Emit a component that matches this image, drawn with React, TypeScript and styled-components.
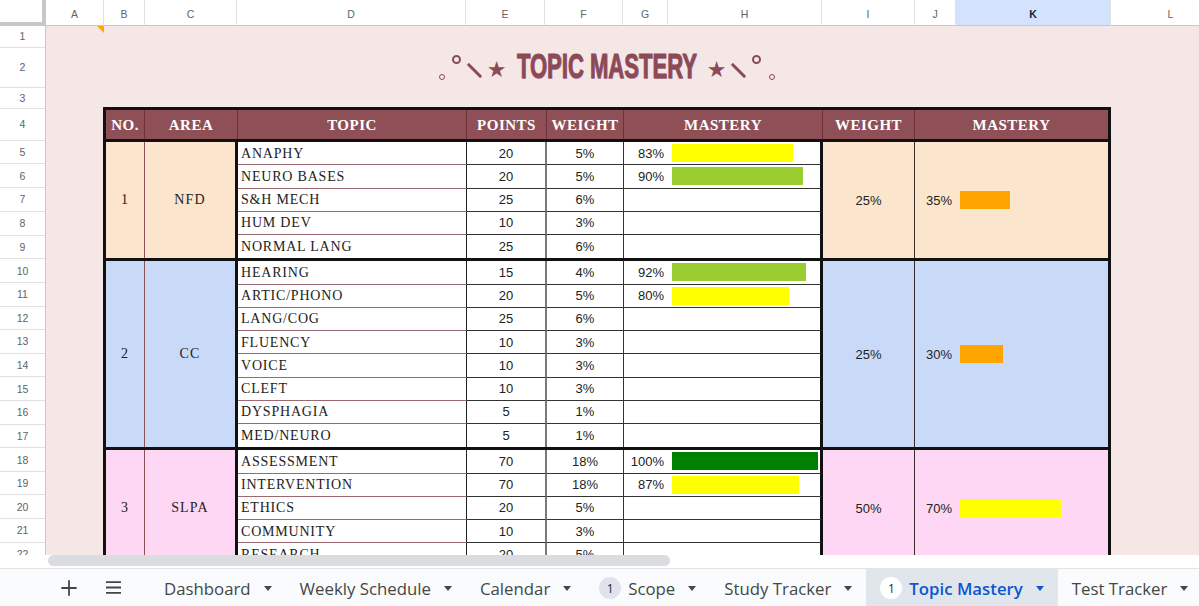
import React from "react";
import styled, { createGlobalStyle } from "styled-components";

const GlobalStyle = createGlobalStyle`
  html, body { margin: 0; padding: 0; background: #ffffff; }
  body { font-family: "Liberation Sans", Arial, sans-serif; overflow: hidden; }
  *, *::before, *::after { box-sizing: border-box; }
`;

/* ---------- sheet geometry ---------- */

const COLUMNS = [
  { label: "A", width: 58 },
  { label: "B", width: 41 },
  { label: "C", width: 92 },
  { label: "D", width: 229 },
  { label: "E", width: 79 },
  { label: "F", width: 78 },
  { label: "G", width: 45 },
  { label: "H", width: 154 },
  { label: "I", width: 93 },
  { label: "J", width: 41 },
  { label: "K", width: 155, selected: true },
  { label: "L", width: 120 },
];

const ROW_HEIGHTS = [
  21.5, 40.5, 21, 31.5,
  23.75, 23.75, 23.75, 23.75, 23.75,
  23.625, 23.625, 23.625, 23.625, 23.625, 23.625, 23.625, 23.625,
  23.6, 23.6, 23.6, 23.6, 23.6,
];

const TRACKS = "39px 93px 229px 80px 77px 199px 92px 193px";
const TOPIC_TRACKS = "229px 80px 77px 199px";
const TOPIC_ROW_H = 23.25;
const LEFT_BAR_FULL = 146;
const RIGHT_BAR_FULL = 144;

type Topic = { name: string; points: number; weight: string; mastery?: number };
type Area = {
  no: number;
  area: string;
  tint: string;
  weight: string;
  mastery: number;
  topics: Topic[];
};

const AREAS: Area[] = [
  {
    no: 1,
    area: "NFD",
    tint: "#fce5cd",
    weight: "25%",
    mastery: 35,
    topics: [
      { name: "ANAPHY", points: 20, weight: "5%", mastery: 83 },
      { name: "NEURO BASES", points: 20, weight: "5%", mastery: 90 },
      { name: "S&H MECH", points: 25, weight: "6%" },
      { name: "HUM DEV", points: 10, weight: "3%" },
      { name: "NORMAL LANG", points: 25, weight: "6%" },
    ],
  },
  {
    no: 2,
    area: "CC",
    tint: "#c9daf8",
    weight: "25%",
    mastery: 30,
    topics: [
      { name: "HEARING", points: 15, weight: "4%", mastery: 92 },
      { name: "ARTIC/PHONO", points: 20, weight: "5%", mastery: 80 },
      { name: "LANG/COG", points: 25, weight: "6%" },
      { name: "FLUENCY", points: 10, weight: "3%" },
      { name: "VOICE", points: 10, weight: "3%" },
      { name: "CLEFT", points: 10, weight: "3%" },
      { name: "DYSPHAGIA", points: 5, weight: "1%" },
      { name: "MED/NEURO", points: 5, weight: "1%" },
    ],
  },
  {
    no: 3,
    area: "SLPA",
    tint: "#fdd7f4",
    weight: "50%",
    mastery: 70,
    topics: [
      { name: "ASSESSMENT", points: 70, weight: "18%", mastery: 100 },
      { name: "INTERVENTION", points: 70, weight: "18%", mastery: 87 },
      { name: "ETHICS", points: 20, weight: "5%" },
      { name: "COMMUNITY", points: 10, weight: "3%" },
      { name: "RESEARCH", points: 20, weight: "5%" },
    ],
  },
];

const barColor = (pct: number) => {
  if (pct >= 100) return "#008000";
  if (pct >= 90) return "#9acd32";
  if (pct >= 50) return "#ffff00";
  return "#ffa500";
};

/* ---------- frame ---------- */

const Screen = styled.div`
  width: 1199px;
  height: 606px;
  display: flex;
  flex-direction: column;
  overflow: hidden;
  background: #ffffff;
`;

const ColumnHeaderBar = styled.div`
  height: 26px;
  flex: none;
  display: flex;
  background: #ffffff;
`;

const Corner = styled.div`
  width: 46px;
  flex: none;
  border-right: 4px solid #c7c7c7;
  border-bottom: 4px solid #c7c7c7;
`;

const ColumnLabel = styled.div<{ $selected?: boolean }>`
  flex: none;
  display: flex;
  align-items: center;
  justify-content: center;
  padding-top: 2px;
  border-right: 1px solid #e1e1e1;
  border-bottom: 1px solid #c7c7c7;
  background: ${(p) => (p.$selected ? "#d3e3fd" : "#ffffff")};
  color: ${(p) => (p.$selected ? "#0b1f3f" : "#5f6368")};
  font: ${(p) => (p.$selected ? 700 : 400)} 10.5px "Liberation Sans", Arial, sans-serif;
`;

const SheetBody = styled.div`
  height: 529px;
  flex: none;
  display: flex;
  overflow: hidden;
`;

const RowHeaders = styled.div`
  width: 46px;
  flex: none;
  display: flex;
  flex-direction: column;
  background: #ffffff;
  border-right: 1px solid #c7c7c7;
`;

const RowNumber = styled.div`
  flex: none;
  display: flex;
  align-items: center;
  justify-content: center;
  border-bottom: 1px solid #e1e1e1;
  color: #5f6368;
  font: 400 10.5px "Liberation Sans", Arial, sans-serif;
`;

const Canvas = styled.div`
  position: relative;
  flex: 1;
  background: #f6e7e7;
  padding-left: 57px;
  display: flex;
  flex-direction: column;
`;

const CommentMark = styled.span`
  position: absolute;
  left: 51px;
  top: 0;
  width: 0;
  height: 0;
  border-top: 7px solid #f9ab00;
  border-left: 7px solid transparent;
`;

const Spacer = styled.div<{ $h: number }>`
  height: ${(p) => p.$h}px;
  flex: none;
`;

/* ---------- title ---------- */

const TitleRow = styled.div`
  width: 1008px;
  height: 40.5px;
  flex: none;
  display: flex;
  align-items: center;
  justify-content: center;
  color: #8c4a55;
`;

const Dot = styled.span<{ $ml?: number; $mr?: number }>`
  flex: none;
  width: 6px;
  height: 6px;
  border: 1.2px solid #8c4a55;
  border-radius: 50%;
  align-self: flex-end;
  margin: 0 ${(p) => p.$mr ?? 0}px 8px ${(p) => p.$ml ?? 0}px;
`;

const Ring = styled.span<{ $ml?: number; $mr?: number }>`
  flex: none;
  width: 9px;
  height: 9px;
  border: 2px solid #8c4a55;
  border-radius: 50%;
  align-self: flex-start;
  margin: 7.5px ${(p) => p.$mr ?? 0}px 0 ${(p) => p.$ml ?? 0}px;
`;

const Slash = styled.span<{ $ml?: number; $mr?: number }>`
  flex: none;
  width: 3px;
  height: 19px;
  border-radius: 1px;
  background: #8c4a55;
  transform: rotate(-45deg);
  margin: 6px ${(p) => p.$mr ?? 0}px 0 ${(p) => p.$ml ?? 0}px;
`;

const Star = styled.span<{ $ml?: number; $mr?: number }>`
  flex: none;
  width: 13px;
  display: flex;
  justify-content: center;
  font: 400 22px "DejaVu Sans", sans-serif;
  line-height: 1;
  margin: 4px ${(p) => p.$mr ?? 0}px 0 ${(p) => p.$ml ?? 0}px;
`;

const TitleText = styled.h1`
  flex: none;
  width: 183px;
  margin: 0 12px 4px;
  display: flex;
  justify-content: center;
  white-space: nowrap;
`;

const TitleInk = styled.span`
  display: inline-block;
  font: 700 35px "Liberation Sans", Arial, sans-serif;
  line-height: 1;
  color: #8c4a55;
  -webkit-text-stroke: 1px #8c4a55;
  text-shadow: 1px 1px 0 rgba(150, 125, 200, 0.55);
  transform: scaleX(0.63);
`;

/* ---------- table ---------- */

const Table = styled.div`
  width: 1008px;
  flex: none;
  border: 3px solid #111111;
  border-bottom: none;
  background: #ffffff;
`;

const HeaderRow = styled.div`
  display: grid;
  grid-template-columns: ${TRACKS};
  height: 32px;
  background: #8e4f57;
  border-bottom: 3px solid #111111;
`;

const HeaderCell = styled.div`
  display: flex;
  align-items: center;
  justify-content: center;
  padding-top: 2px;
  color: #ffffff;
  font: 700 15px "Liberation Serif", "Times New Roman", serif;
  letter-spacing: 0.5px;
  border-right: 1px solid #6e3039;
  &:last-child {
    border-right: none;
  }
`;

const Group = styled.div<{ $last?: boolean }>`
  display: flex;
  border-bottom: ${(p) => (p.$last ? "none" : "3px solid #111111")};
`;

const SerifCell = styled.div<{ $tint: string }>`
  display: flex;
  align-items: center;
  justify-content: center;
  background: ${(p) => p.$tint};
  color: #222222;
  font: 400 14px "Liberation Serif", "Times New Roman", serif;
  letter-spacing: 1.2px;
`;

const NoCell = styled(SerifCell)`
  width: 39px;
  border-right: 1px solid #8e4f57;
`;

const AreaCell = styled(SerifCell)`
  width: 93px;
  border-right: 3px solid #111111;
`;

const TopicList = styled.div`
  width: 585px;
  display: flex;
  flex-direction: column;
`;

const TopicRow = styled.div<{ $last?: boolean }>`
  display: grid;
  grid-template-columns: ${TOPIC_TRACKS};
  height: ${TOPIC_ROW_H}px;
  & > * {
    border-bottom-style: solid;
    border-bottom-width: ${(p) => (p.$last ? 0 : 1)}px;
  }
`;

const TopicName = styled.div`
  display: flex;
  align-items: center;
  padding: 1px 0 0 3px;
  white-space: nowrap;
  color: #222222;
  font: 400 14px "Liberation Serif", "Times New Roman", serif;
  letter-spacing: 0.8px;
  border-right: 1px solid #222222;
  border-bottom-color: #9b6a70;
`;

const NumberCell = styled.div<{ $rule: string }>`
  display: flex;
  align-items: center;
  justify-content: center;
  color: #222222;
  font: 400 13px "Liberation Sans", Arial, sans-serif;
  border-right: ${(p) => p.$rule};
  border-bottom-color: #333333;
`;

const MasteryCell = styled.div`
  display: flex;
  align-items: center;
  border-right: 3px solid #111111;
  border-bottom-color: #333333;
`;

const Percent = styled.span<{ $w: number }>`
  flex: none;
  width: ${(p) => p.$w}px;
  padding-right: 4px;
  text-align: right;
  color: #222222;
  font: 400 13px "Liberation Sans", Arial, sans-serif;
`;

const Bar = styled.span<{ $color: string }>`
  flex: none;
  height: 18px;
  margin-left: 4px;
  background: ${(p) => p.$color};
`;

const AreaWeight = styled.div<{ $tint: string }>`
  width: 92px;
  display: flex;
  align-items: center;
  justify-content: center;
  background: ${(p) => p.$tint};
  border-right: 1px solid #3a2a2c;
  color: #222222;
  font: 400 13px "Liberation Sans", Arial, sans-serif;
`;

const AreaMastery = styled.div<{ $tint: string }>`
  width: 193px;
  display: flex;
  align-items: center;
  background: ${(p) => p.$tint};
`;

/* ---------- bottom chrome ---------- */

const ScrollStrip = styled.div`
  height: 13px;
  flex: none;
  background: #ffffff;
  padding: 0 0 0 48px;
`;

const ScrollThumb = styled.div`
  width: 622px;
  height: 11px;
  border-radius: 6px;
  background: #dadce0;
`;

const TabBar = styled.nav`
  height: 38px;
  flex: none;
  display: flex;
  align-items: stretch;
  background: #f9fbfd;
  border-top: 1px solid #e3e3e3;
  padding-left: 51px;
  white-space: nowrap;
`;

const IconButton = styled.button<{ $after: number }>`
  width: 36px;
  flex: none;
  display: flex;
  align-items: center;
  justify-content: center;
  padding: 0;
  border: 0;
  background: none;
  color: #444746;
  margin-right: ${(p) => p.$after}px;
`;

const Tab = styled.div<{ $active?: boolean }>`
  flex: none;
  display: flex;
  align-items: center;
  padding: 1px 14px 0 14px;
  background: ${(p) => (p.$active ? "#e1e6ed" : "transparent")};
  color: ${(p) => (p.$active ? "#0b57d0" : "#444746")};
  font: ${(p) => (p.$active ? 600 : 400)} 16.8px "Open Sans", "Liberation Sans", sans-serif;
`;

const TabLabel = styled.span`
  margin-right: 13px;
`;

const Caret = styled.span`
  width: 0;
  height: 0;
  border-left: 4px solid transparent;
  border-right: 4px solid transparent;
  border-top: 5px solid currentColor;
`;

const Badge = styled.span<{ $active?: boolean }>`
  width: 22px;
  height: 22px;
  margin-right: 7px;
  border-radius: 50%;
  display: flex;
  align-items: center;
  justify-content: center;
  background: ${(p) => (p.$active ? "#ffffff" : "#dfe3eb")};
  color: #1f1f1f;
  font: 400 12px "Open Sans", sans-serif;
`;

const TABS: { name: string; badge?: number; active?: boolean }[] = [
  { name: "Dashboard" },
  { name: "Weekly Schedule" },
  { name: "Calendar" },
  { name: "Scope", badge: 1 },
  { name: "Study Tracker" },
  { name: "Topic Mastery", badge: 1, active: true },
  { name: "Test Tracker" },
];

const PlusIcon = () => (
  <svg width="24" height="24" viewBox="0 0 24 24" fill="none" stroke="currentColor" strokeWidth="1.8" strokeLinecap="round">
    <path d="M12 5v14M5 12h14" />
  </svg>
);

const MenuIcon = () => (
  <svg width="21" height="21" viewBox="0 0 21 21" fill="none" stroke="currentColor" strokeWidth="1.8">
    <path d="M3 5.2h15M3 10.5h15M3 15.8h15" />
  </svg>
);

/* ---------- page ---------- */

export default function App() {
  return (
    <>
      <GlobalStyle />
      <Screen>
        <ColumnHeaderBar>
          <Corner />
          {COLUMNS.map((c) => (
            <ColumnLabel key={c.label} $selected={c.selected} style={{ width: c.width }}>
              {c.label}
            </ColumnLabel>
          ))}
        </ColumnHeaderBar>

        <SheetBody>
          <RowHeaders>
            {ROW_HEIGHTS.map((h, i) => (
              <RowNumber key={i} style={{ height: h }}>
                {i + 1}
              </RowNumber>
            ))}
          </RowHeaders>

          <Canvas>
            <CommentMark />
            <Spacer $h={21.5} />
            <TitleRow>
              <Dot $mr={7} />
              <Ring $mr={12} />
              <Slash $mr={14} />
              <Star>★</Star>
              <TitleText>
                <TitleInk>TOPIC MASTERY</TitleInk>
              </TitleText>
              <Star $mr={13.5}>★</Star>
              <Slash $mr={12.5} />
              <Ring $mr={8} />
              <Dot />
            </TitleRow>
            <Spacer $h={19} />

            <Table>
              <HeaderRow>
                {["NO.", "AREA", "TOPIC", "POINTS", "WEIGHT", "MASTERY", "WEIGHT", "MASTERY"].map((h, i) => (
                  <HeaderCell key={i}>{h}</HeaderCell>
                ))}
              </HeaderRow>

              {AREAS.map((a, gi) => (
                <Group key={a.area} $last={gi === AREAS.length - 1}>
                  <NoCell $tint={a.tint}>{a.no}</NoCell>
                  <AreaCell $tint={a.tint}>{a.area}</AreaCell>
                  <TopicList>
                    {a.topics.map((t, ti) => (
                      <TopicRow key={t.name} $last={ti === a.topics.length - 1 && gi !== AREAS.length - 1}>
                        <TopicName>{t.name}</TopicName>
                        <NumberCell $rule="2px solid #7a7a7a">{t.points}</NumberCell>
                        <NumberCell $rule="1px solid #333333">{t.weight}</NumberCell>
                        <MasteryCell>
                          {t.mastery !== undefined && (
                            <>
                              <Percent $w={44}>{t.mastery}%</Percent>
                              <Bar
                                $color={barColor(t.mastery)}
                                style={{ width: (LEFT_BAR_FULL * t.mastery) / 100 }}
                              />
                            </>
                          )}
                        </MasteryCell>
                      </TopicRow>
                    ))}
                  </TopicList>
                  <AreaWeight $tint={a.tint}>{a.weight}</AreaWeight>
                  <AreaMastery $tint={a.tint}>
                    <Percent $w={41}>{a.mastery}%</Percent>
                    <Bar $color={barColor(a.mastery)} style={{ width: (RIGHT_BAR_FULL * a.mastery) / 100 }} />
                  </AreaMastery>
                </Group>
              ))}
            </Table>
          </Canvas>
        </SheetBody>

        <ScrollStrip>
          <ScrollThumb />
        </ScrollStrip>

        <TabBar>
          <IconButton $after={8} aria-label="Add sheet">
            <PlusIcon />
          </IconButton>
          <IconButton $after={19} aria-label="All sheets">
            <MenuIcon />
          </IconButton>
          {TABS.map((t) => (
            <Tab key={t.name} $active={t.active}>
              {t.badge !== undefined && <Badge $active={t.active}>{t.badge}</Badge>}
              <TabLabel>{t.name}</TabLabel>
              <Caret />
            </Tab>
          ))}
        </TabBar>
      </Screen>
    </>
  );
}
